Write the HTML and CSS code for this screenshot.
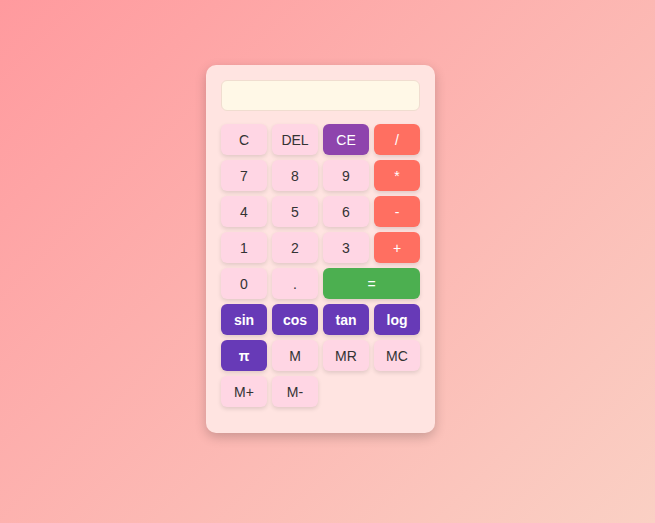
FILE: index.html
```html
<!DOCTYPE html>
<html lang="en">
<head>
<meta charset="utf-8">
<title>Calculator</title>
<link rel="stylesheet" href="styles.css">
</head>
<body>
<div class="calc">
  <div class="display"></div>
  <div class="keys">
    <button class="key">C</button>
    <button class="key">DEL</button>
    <button class="key ce">CE</button>
    <button class="key op">/</button>
    <button class="key">7</button>
    <button class="key">8</button>
    <button class="key">9</button>
    <button class="key op">*</button>
    <button class="key">4</button>
    <button class="key">5</button>
    <button class="key">6</button>
    <button class="key op">-</button>
    <button class="key">1</button>
    <button class="key">2</button>
    <button class="key">3</button>
    <button class="key op">+</button>
    <button class="key">0</button>
    <button class="key">.</button>
    <button class="key eq">=</button>
    <button class="key fn">sin</button>
    <button class="key fn">cos</button>
    <button class="key fn">tan</button>
    <button class="key fn">log</button>
    <button class="key fn">π</button>
    <button class="key">M</button>
    <button class="key">MR</button>
    <button class="key">MC</button>
    <button class="key">M+</button>
    <button class="key">M-</button>
  </div>
</div>
</body>
</html>
```
FILE: styles.css
```css
html, body {
  margin: 0;
  height: 100%;
}
body {
  font-family: "Liberation Sans", Arial, sans-serif;
  background: linear-gradient(135deg, #ff9a9e 0%, #fad0c4 100%);
  display: flex;
  justify-content: center;
  align-items: flex-start;
  padding: 65px 14px 0 0;
  box-sizing: border-box;
}
.calc {
  width: 229px;
  box-sizing: border-box;
  background: #ffe4e1;
  border-radius: 10px;
  padding: 15px 15px 26px;
  box-shadow: 0 4px 12px rgba(0, 0, 0, 0.2);
}
.display {
  height: 31px;
  box-sizing: border-box;
  background: #fff8e7;
  border: 1px solid #f0ddd0;
  border-radius: 6px;
  margin-bottom: 13px;
}
.keys {
  display: grid;
  grid-template-columns: repeat(4, 46px);
  grid-auto-rows: 31px;
  gap: 5px;
}
.key {
  font-family: inherit;
  font-size: 14px;
  color: #333;
  background: #ffd6e4;
  border: none;
  border-radius: 6px;
  box-shadow: 0 2px 4px rgba(0, 0, 0, 0.12);
  padding: 0;
}
.ce {
  background: #8e44ad;
  color: #fff;
}
.op {
  background: #ff6f61;
  color: #fff;
}
.eq {
  grid-column: span 2;
  background: #4caf50;
  color: #fff;
}
.fn {
  background: #673ab7;
  color: #fff;
  font-weight: bold;
}
```
